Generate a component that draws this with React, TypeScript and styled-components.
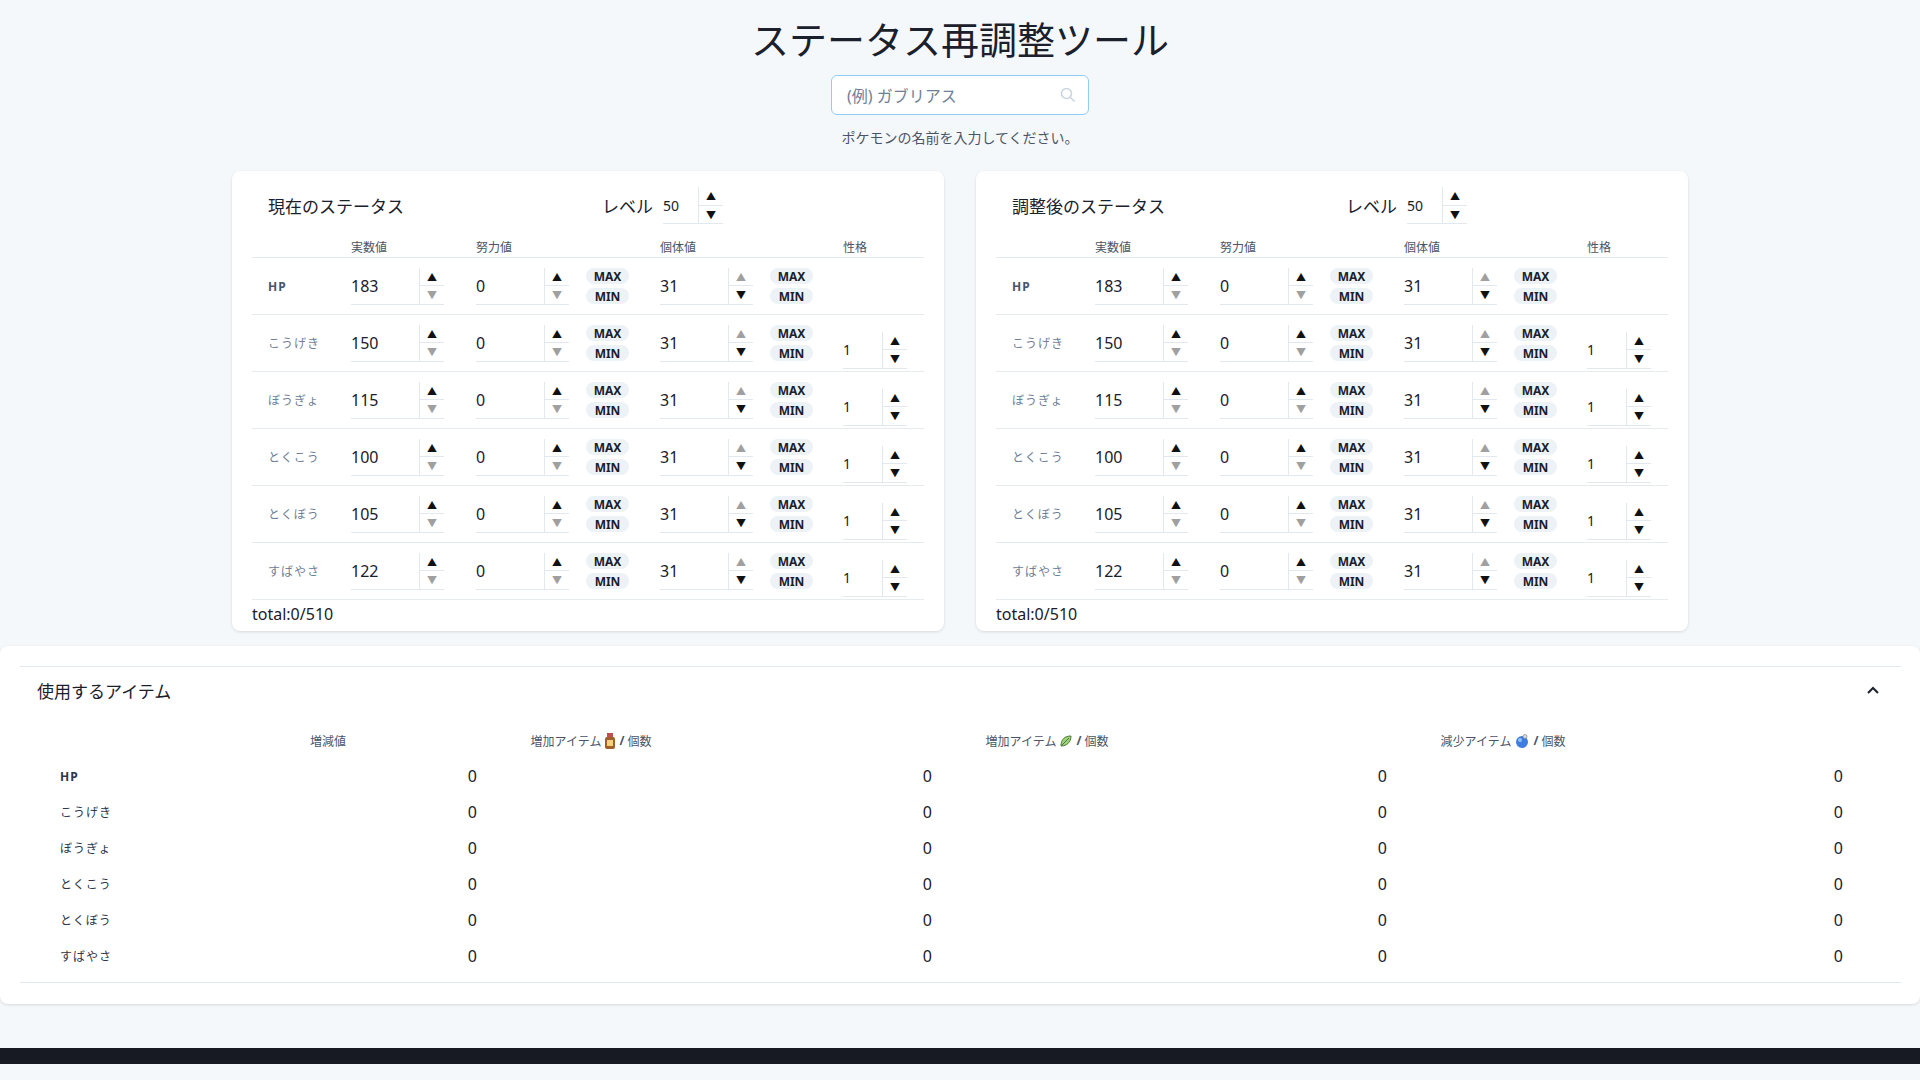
import React from "react";
import styled, { createGlobalStyle } from "styled-components";

const Global = createGlobalStyle`
  html { overflow-x: scroll; overflow-y: scroll; }
  body { margin: 0; background: #f5f8fb; font-family: "Noto Sans", "Noto Sans CJK JP", sans-serif; color: #1a202c; }
  * { box-sizing: border-box; }
`;

const Page = styled.div`display:flex;flex-direction:column;align-items:center;min-height:1064px;`;
const Title = styled.h1`margin:14px 0 0;font-size:38px;font-weight:400;line-height:48px;font-family:"Noto Sans CJK JP",sans-serif;`;
const Search = styled.div`margin-top:13px;width:258px;height:40px;border:1px solid #90cdf4;border-radius:6px;background:#fff;display:flex;align-items:center;justify-content:space-between;padding:0 12px 0 15px;color:#718096;font-size:16px;`;
const Help = styled.div`margin-top:12px;font-size:14px;color:#4a5568;`;
const Cards = styled.div`margin-top:24px;display:flex;gap:32px;`;
const Card = styled.div`width:712px;height:460px;background:#fff;border-radius:8px;box-shadow:0 1px 3px rgba(0,0,0,.12);padding:16px 20px 0 20px;`;
const CardHead = styled.div`display:flex;align-items:center;height:37px;padding-left:16px;`;
const CardTitle = styled.div`font-size:17px;width:334px;`;
const LvLabel = styled.div`font-size:17px;margin-right:10px;`;
const Table = styled.div`margin-top:12px;`;
const Row = styled.div<{ h: number }>`display:grid;grid-template-columns:99px 125px 110px 74px 110px 73px 1fr;align-items:center;height:${p => p.h}px;border-bottom:1px solid #e6ebf0;`;
const HeadCell = styled.div`font-size:12px;color:#4a5568;`;
const Label = styled.div<{ hp?: boolean }>`padding-left:16px;font-size:12px;color:${p => (p.hp ? "#4a5568" : "#718096")};font-weight:${p => (p.hp ? 700 : 400)};letter-spacing:1px;`;
const NumWrap = styled.div<{ w: number }>`display:flex;width:${p => p.w}px;height:37px;border-bottom:1px solid #e2e8f0;`;
const NumVal = styled.div<{ fs: number }>`flex:1;display:flex;align-items:center;font-size:${p => p.fs}px;`;
const Spin = styled.div`width:25px;border-left:1px solid #e2e8f0;display:flex;flex-direction:column;`;
const Arrow = styled.div<{ off?: boolean; top?: boolean }>`flex:1;display:flex;align-items:center;justify-content:center;color:${p => (p.off ? "#a0a0a0" : "#111")};font-size:10px;${p => (p.top ? "border-bottom:1px solid #e2e8f0;" : "")}`;
const Pills = styled.div`display:flex;flex-direction:column;gap:4px;`;
const Pill = styled.div`width:43px;height:16px;border-radius:8px;background:#edf2f7;font-size:12px;font-weight:700;display:flex;align-items:center;justify-content:center;color:#1a202c;`;
const NatureCell = styled.div`padding-top:14px;`;
const Total = styled.div`font-size:16px;margin-top:3px;`;

const Panel = styled.div`margin-top:15px;width:100%;height:358px;background:#fff;border-radius:8px;box-shadow:0 1px 3px rgba(0,0,0,.12);padding:20px 19px 0 20px;`;
const PanelInner = styled.div`border-top:1px solid #e2e8f0;border-bottom:1px solid #e2e8f0;`;
const PanelHead = styled.div`display:flex;justify-content:space-between;align-items:center;height:46px;padding:0 22px 0 17px;font-size:17px;`;
const IHead = styled.div`display:grid;grid-template-columns:176px 224px 302px 610px 302px;margin-top:10px;height:35px;align-items:center;padding-left:20px;`;
const IHeadCell = styled.div`text-align:center;font-size:12px;color:#4a5568;display:flex;align-items:center;justify-content:center;gap:3px;`;
const IRow = styled.div`display:grid;grid-template-columns:224px 233px 455px 455px 456px;height:36px;align-items:center;`;
const ILabel = styled.div<{ hp?: boolean }>`padding-left:40px;font-size:12px;font-weight:${p => (p.hp ? 700 : 400)};color:#2d3748;letter-spacing:1px;`;
const IVal = styled.div`text-align:right;font-size:16px;`;
const Footer = styled.div`margin-top:44px;width:100%;height:16px;background:#171a23;`;

const Num = ({ v, w, up = true, down = true, fs = 16 }: { v: string; w: number; up?: boolean; down?: boolean; fs?: number }) => (
  <NumWrap w={w}>
    <NumVal fs={fs}>{v}</NumVal>
    <Spin>
      <Arrow top off={!up}>▲</Arrow>
      <Arrow off={!down}>▼</Arrow>
    </Spin>
  </NumWrap>
);

const stats = [
  ["HP", "183"], ["こうげき", "150"], ["ぼうぎょ", "115"], ["とくこう", "100"], ["とくぼう", "105"], ["すばやさ", "122"],
];

const Bottle = () => (
  <svg width="12" height="16" viewBox="0 0 12 16"><rect x="3" y="0" width="6" height="4" fill="#c0504d" /><rect x="1" y="4" width="10" height="12" rx="2" fill="#a0602a" /><rect x="3" y="7" width="6" height="6" fill="#f5d27a" /></svg>
);
const Leaf = () => (
  <svg width="14" height="14" viewBox="0 0 14 14"><path d="M2 12 C2 5 6 2 12 2 C12 8 8 12 2 12Z" fill="#9fd07a" stroke="#4a7a3a" /><path d="M2 12 L10 4" stroke="#4a7a3a" /></svg>
);
const Berry = () => (
  <svg width="16" height="14" viewBox="0 0 16 14"><circle cx="8" cy="8" r="6" fill="#3f7ee0" /><circle cx="6" cy="6" r="2" fill="#8fc1ff" /><circle cx="11" cy="2.5" r="2" fill="#ddd" stroke="#777" strokeWidth=".6" /></svg>
);

const StatCard = ({ title }: { title: string }) => (
  <Card>
    <CardHead>
      <CardTitle>{title}</CardTitle>
      <LvLabel>レベル</LvLabel>
      <Num v="50" w={60} fs={14} />
    </CardHead>
    <Table>
      <Row h={22}>
        <div />
        <HeadCell>実数値</HeadCell>
        <HeadCell>努力値</HeadCell>
        <div />
        <HeadCell>個体値</HeadCell>
        <div />
        <HeadCell>性格</HeadCell>
      </Row>
      {stats.map(([n, v], i) => (
        <Row h={57} key={n}>
          <Label hp={i === 0}>{n}</Label>
          <Num v={v} w={93} down={false} />
          <Num v="0" w={93} down={false} />
          <Pills><Pill>MAX</Pill><Pill>MIN</Pill></Pills>
          <Num v="31" w={93} up={false} />
          <Pills><Pill>MAX</Pill><Pill>MIN</Pill></Pills>
          <NatureCell>{i > 0 && <Num v="1" w={64} fs={14} />}</NatureCell>
        </Row>
      ))}
    </Table>
    <Total>total:0/510</Total>
  </Card>
);

export default function App() {
  return (
    <Page>
      <Global />
      <Title>ステータス再調整ツール</Title>
      <Search>
        <span>(例) ガブリアス</span>
        <svg width="16" height="16" viewBox="0 0 16 16" fill="none" stroke="#cbd5e0" strokeWidth="1.6"><circle cx="6.5" cy="6.5" r="5" /><path d="M10.2 10.2 L14.5 14.5" /></svg>
      </Search>
      <Help>ポケモンの名前を入力してください。</Help>
      <Cards>
        <StatCard title="現在のステータス" />
        <StatCard title="調整後のステータス" />
      </Cards>
      <Panel>
        <PanelInner>
          <PanelHead>
            <span>使用するアイテム</span>
            <svg width="12" height="8" viewBox="0 0 12 8" fill="none" stroke="#1a202c" strokeWidth="2"><path d="M1 7 L6 2 L11 7" /></svg>
          </PanelHead>
          <IHead>
            <div />
            <IHeadCell>増減値</IHeadCell>
            <IHeadCell>増加アイテム <Bottle /> <b>/</b> 個数</IHeadCell>
            <IHeadCell>増加アイテム <Leaf /> <b>/</b> 個数</IHeadCell>
            <IHeadCell>減少アイテム <Berry /> <b>/</b> 個数</IHeadCell>
          </IHead>
          <div style={{ paddingBottom: 8 }}>
            {stats.map(([n], i) => (
              <IRow key={n}>
                <ILabel hp={i === 0}>{n}</ILabel>
                <IVal>0</IVal><IVal>0</IVal><IVal>0</IVal><IVal>0</IVal>
              </IRow>
            ))}
          </div>
        </PanelInner>
      </Panel>
      <Footer />
    </Page>
  );
}
